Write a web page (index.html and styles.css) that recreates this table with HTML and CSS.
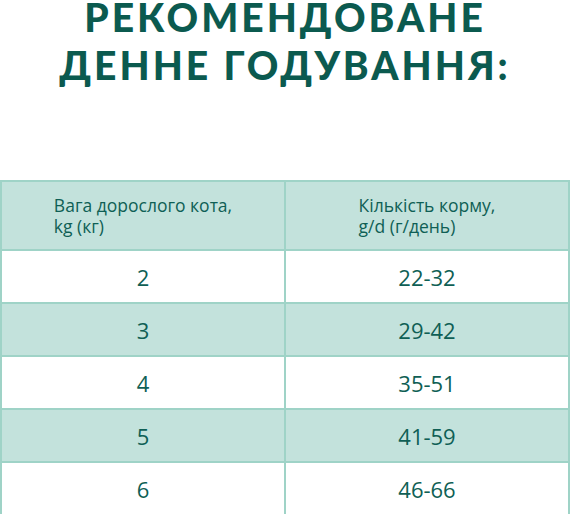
FILE: index.html
```html
<!DOCTYPE html>
<html lang="uk">
<head>
<meta charset="utf-8">
<link rel="stylesheet" href="styles.css">
</head>
<body>
<div class="head">
  <h1 class="title"><span class="l1">Рекомендоване</span><span class="l2">денне годування:</span></h1>
</div>
<table class="feed">
  <thead>
    <tr>
      <th><span class="hd">Вага дорослого кота,<br>kg (кг)</span></th>
      <th><span class="hd">Кількість корму,<br>g/d (г/день)</span></th>
    </tr>
  </thead>
  <tbody>
    <tr><td>2</td><td>22-32</td></tr>
    <tr class="alt"><td>3</td><td>29-42</td></tr>
    <tr><td>4</td><td>35-51</td></tr>
    <tr class="alt"><td>5</td><td>41-59</td></tr>
    <tr><td>6</td><td>46-66</td></tr>
  </tbody>
</table>
</body>
</html>
```
FILE: styles.css
```css
html, body {
  margin: 0;
  padding: 0;
  background: #ffffff;
}
body {
  width: 570px;
  font-family: "Open Sans", "Noto Sans", sans-serif;
  color: #0f5f55;
}
.head {
  height: 180px;
}
.title {
  margin: 0;
  text-align: center;
  text-transform: uppercase;
  font-family: Lato, "Open Sans", sans-serif;
  font-weight: 900;
  font-size: 39px;
  letter-spacing: 3px;
  color: #0b5a4f;
}
.l1 {
  display: block;
  line-height: 34px;
}
.l2 {
  display: block;
  line-height: 62px;
}
.feed {
  width: 570px;
  border-collapse: collapse;
  table-layout: fixed;
}
.feed th, .feed td {
  border: 2px solid #9fd3c7;
  width: 50%;
  text-align: center;
}
.feed th {
  background: #c3e2dc;
  height: 67px;
  font-weight: 400;
  font-size: 17.5px;
  line-height: 21px;
  padding: 0;
}
.hd {
  display: inline-block;
  text-align: left;
}
.feed td {
  height: 51px;
  padding: 0;
  font-size: 22px;
}
.feed tr.alt td {
  background: #c3e2dc;
}
```
